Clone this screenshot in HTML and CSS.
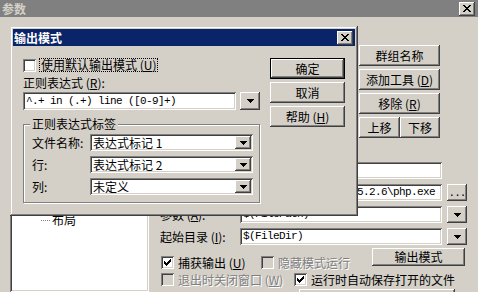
FILE: index.html
```html
<!DOCTYPE html>
<html lang="zh-CN">
<head>
<meta charset="utf-8">
<title>输出模式</title>
<link rel="stylesheet" href="styles.css">
</head>
<body>
<div class="win">
  <div class="caption inactive">
    <span class="cap-text">参数</span>
    <span class="capbtn raised"><svg width="8" height="7" viewBox="0 0 8 7" shape-rendering="crispEdges"><path d="M0 0h2v1H0zM6 0h2v1H6zM1 1h2v1H1zM5 1h2v1H5zM2 2h4v1H2zM3 3h2v1H3zM2 4h4v1H2zM1 5h2v1H1zM5 5h2v1H5zM0 6h2v1H0zM6 6h2v1H6z"/></svg></span>
  </div>
  <div class="client">
    <div class="tree sunken">
      <div class="tree-item"><span class="dots"></span>布局</div>
    </div>
    <div class="main">
      <div class="btn-col">
        <div class="btn raised">群组名称</div>
        <div class="btn raised">添加工具 (<u>D</u>)</div>
        <div class="btn raised">移除 (<u>R</u>)</div>
        <div class="btn-pair"><div class="btn raised up">上移</div><div class="btn raised down">下移</div></div>
      </div>
      <div class="frows">
        <div class="frow"><span class="flbl">菜单文本 (<u>M</u>):</span><div class="field sunken"></div></div>
        <div class="frow"><span class="flbl">命令 (<u>C</u>):</span><div class="field sunken mono">C:\ProgramFiles\php5.2.6\php.exe</div><div class="sbtn raised dots-btn">...</div></div>
        <div class="frow"><span class="flbl">参数 (<u>A</u>):</span><div class="field sunken mono">$(FilePath)</div><div class="sbtn raised"><svg width="7" height="4" viewBox="0 0 7 4" shape-rendering="crispEdges"><path d="M0 0h7v1H0zM1 1h5v1H1zM2 2h3v1H2zM3 3h1v1H3z"/></svg></div></div>
        <div class="frow"><span class="flbl">起始目录 (<u>I</u>):</span><div class="field sunken mono">$(FileDir)</div><div class="sbtn raised"><svg width="7" height="4" viewBox="0 0 7 4" shape-rendering="crispEdges"><path d="M0 0h7v1H0zM1 1h5v1H1zM2 2h3v1H2zM3 3h1v1H3z"/></svg></div></div>
      </div>
      <div class="opts">
        <div class="opt-row first">
          <div class="chk-item w100"><span class="chk sunken"><svg width="7" height="7" viewBox="0 0 7 7" shape-rendering="crispEdges"><path d="M6 0h1v1H6zM5 1h2v1H5zM0 2h1v1H0zM4 2h3v1H4zM0 3h2v1H0zM3 3h3v1H3zM0 4h5v1H0zM1 5h3v1H1zM2 6h1v1H2z"/></svg></span><span>捕获输出 (<u>U</u>)</span></div>
          <div class="chk-item w111 disabled"><span class="chk sunken"></span><span>隐藏模式运行</span></div>
          <div class="btn raised out-btn">输出模式</div>
        </div>
        <div class="opt-row second">
          <div class="chk-item w133 disabled"><span class="chk sunken"></span><span>退出时关闭窗口 (<u>W</u>)</span></div>
          <div class="chk-item"><span class="chk sunken"><svg width="7" height="7" viewBox="0 0 7 7" shape-rendering="crispEdges"><path d="M6 0h1v1H6zM5 1h2v1H5zM0 2h1v1H0zM4 2h3v1H4zM0 3h2v1H0zM3 3h3v1H3zM0 4h5v1H0zM1 5h3v1H1zM2 6h1v1H2z"/></svg></span><span>运行时自动保存打开的文件</span></div>
        </div>
        <div class="btn raised wide-btn"></div>
      </div>
    </div>
  </div>
</div>

<div class="dlg">
  <div class="caption active">
    <span class="cap-text">输出模式</span>
    <span class="capbtn raised"><svg width="8" height="7" viewBox="0 0 8 7" shape-rendering="crispEdges"><path d="M0 0h2v1H0zM6 0h2v1H6zM1 1h2v1H1zM5 1h2v1H5zM2 2h4v1H2zM3 3h2v1H3zM2 4h4v1H2zM1 5h2v1H1zM5 5h2v1H5zM0 6h2v1H0zM6 6h2v1H6z"/></svg></span>
  </div>
  <div class="dlg-body">
    <div class="dlg-main">
      <div class="chk-row"><span class="chk sunken"></span><span class="focus">使用默认输出模式 (<u>U</u>)</span></div>
      <div class="lbl-line">正则表达式 (<u>R</u>):</div>
      <div class="combo-row">
        <div class="rfield sunken mono">^.+ in (.+) line ([0-9]+)</div>
        <div class="rbtn raised"><svg width="7" height="4" viewBox="0 0 7 4" shape-rendering="crispEdges"><path d="M0 0h7v1H0zM1 1h5v1H1zM2 2h3v1H2zM3 3h1v1H3z"/></svg></div>
      </div>
      <div class="group">
        <span class="legend">正则表达式标签</span>
        <div class="grow"><span class="glbl">文件名称:</span><div class="combo sunken"><span class="ctext">表达式标记 1</span><span class="cbtn raised"><svg width="7" height="4" viewBox="0 0 7 4" shape-rendering="crispEdges"><path d="M0 0h7v1H0zM1 1h5v1H1zM2 2h3v1H2zM3 3h1v1H3z"/></svg></span></div></div>
        <div class="grow"><span class="glbl">行:</span><div class="combo sunken"><span class="ctext">表达式标记 2</span><span class="cbtn raised"><svg width="7" height="4" viewBox="0 0 7 4" shape-rendering="crispEdges"><path d="M0 0h7v1H0zM1 1h5v1H1zM2 2h3v1H2zM3 3h1v1H3z"/></svg></span></div></div>
        <div class="grow"><span class="glbl">列:</span><div class="combo sunken"><span class="ctext">未定义</span><span class="cbtn raised"><svg width="7" height="4" viewBox="0 0 7 4" shape-rendering="crispEdges"><path d="M0 0h7v1H0zM1 1h5v1H1zM2 2h3v1H2zM3 3h1v1H3z"/></svg></span></div></div>
      </div>
    </div>
    <div class="dlg-btns">
      <div class="btn raised default">确定</div>
      <div class="btn raised">取消</div>
      <div class="btn raised">帮助 (<u>H</u>)</div>
    </div>
  </div>
</div>
</body>
</html>
```

FILE: styles.css
```css
* { box-sizing: border-box; margin: 0; padding: 0; }
html, body { width: 478px; height: 292px; overflow: hidden; }
body {
  position: relative;
  background: #d4d0c8;
  color: #000;
  font-family: "Noto Sans CJK SC", "Noto Sans", sans-serif;
  font-size: 12px;
  line-height: 14px;
}
u { text-decoration: underline; text-underline-offset: 1px; }
svg { display: block; }

.raised {
  background: #d4d0c8;
  box-shadow: inset -1px -1px #404040, inset 1px 1px #fff, inset -2px -2px #808080, inset 2px 2px #d4d0c8;
}
.sunken {
  background: #fff;
  box-shadow: inset 1px 1px #808080, inset -1px -1px #fff, inset 2px 2px #404040, inset -2px -2px #d4d0c8;
}

/* outer window */
.win { height: 292px; overflow: hidden; display: flex; flex-direction: column; }
.caption { flex: none; display: flex; align-items: center; justify-content: space-between; height: 17px; }
.caption.inactive { background: #808080; color: #d4d0c8; padding: 0 3px 0 2px; }
.caption.active { background: #0a246a; color: #fff; padding: 0 2px 0 1px; }
.cap-text { font-weight: bold; line-height: 17px; }
.capbtn { width: 16px; height: 14px; display: flex; align-items: center; justify-content: center; }

.client { flex: 1; display: flex; min-height: 0; overflow: hidden; }
.tree { width: 139px; margin: 27px 0 0 10px; padding: 168px 0 0 31px; }
.tree-item { display: flex; align-items: center; height: 16px; line-height: 16px; }
.dots { width: 9px; border-top: 1px dotted #808080; margin-right: 2px; }

.main { width: 329px; display: flex; flex-direction: column; padding: 28px 0 0 11px; }
.btn-col { margin-left: 199px; width: 81px; display: flex; flex-direction: column; gap: 3px; }
.btn { height: 21px; display: flex; align-items: center; justify-content: center; white-space: nowrap; line-height: 14px; }
.btn-pair { display: flex; }
.btn.up { width: 41px; }
.btn.down { width: 40px; }

.frows { margin-top: 24px; display: flex; flex-direction: column; gap: 5px; }
.frow { height: 17px; display: flex; align-items: center; }
.flbl { width: 80px; white-space: nowrap; }
.field { width: 202px; height: 17px; }
.sbtn { width: 20px; height: 17px; margin-left: 5px; display: flex; align-items: center; justify-content: center; }
.dots-btn { align-items: flex-end; padding-bottom: 3px; line-height: 10px; font-family: "Liberation Mono", monospace; font-size: 11px; letter-spacing: -1px; }

.mono {
  font-family: "Liberation Mono", monospace;
  font-size: 11px;
  letter-spacing: -0.6px;
  line-height: 13px;
  padding: 2px 0 0 3px;
  white-space: nowrap;
  overflow: hidden;
}

.opts { margin-top: 3px; display: flex; flex-direction: column; }
.opt-row { display: flex; padding-left: 1px; }
.opt-row.first { height: 21px; align-items: flex-end; }
.opt-row.second { height: 17px; align-items: flex-end; }
.chk-item { display: flex; align-items: center; gap: 4px; height: 13px; line-height: 13px; white-space: nowrap; }
.w100 { width: 100px; }
.w111 { width: 111px; }
.w133 { width: 133px; }
.out-btn { width: 93px; height: 18px; align-self: flex-start; }
.wide-btn { margin: 3px 0 0 139px; width: 156px; height: 21px; flex: none; }

.chk { flex: none; width: 13px; height: 13px; display: flex; align-items: center; justify-content: center; }
.disabled { color: #808080; text-shadow: 1px 1px #fff; }
.disabled .chk { background: #d4d0c8; }

/* dialog */
.dlg {
  position: absolute;
  left: 10px;
  top: 26px;
  width: 348px;
  height: 190px;
  padding: 3px;
  background: #d4d0c8;
  box-shadow: inset -1px -1px #404040, inset 1px 1px #d4d0c8, inset -2px -2px #808080, inset 2px 2px #fff;
}
.dlg-body { display: flex; gap: 10px; padding: 12px 10px 0 10px; }
.dlg-main { width: 237px; display: flex; flex-direction: column; }
.dlg-btns { width: 75px; display: flex; flex-direction: column; gap: 3px; }
.btn.default { border: 1px solid #000; }

.chk-row { display: flex; align-items: center; gap: 3px; height: 14px; }
.focus { border: 1px dotted #000; padding: 0 1px; height: 14px; line-height: 12px; white-space: nowrap; }
.lbl-line { margin-top: 4px; line-height: 14px; }
.combo-row { margin-top: 2px; height: 18px; display: flex; gap: 4px; }
.rfield { width: 213px; height: 18px; padding-top: 3px; }
.rbtn { width: 20px; height: 18px; display: flex; align-items: center; justify-content: center; }

.group {
  position: relative;
  margin-top: 14px;
  border: 1px solid #808080;
  box-shadow: inset 1px 1px #fff, 1px 1px #fff;
  padding: 9px 6px 7px 8px;
  display: flex;
  flex-direction: column;
  gap: 5px;
}
.legend { position: absolute; top: -8px; left: 6px; padding: 0 2px; background: #d4d0c8; line-height: 14px; }
.grow { display: flex; align-items: center; height: 17px; }
.glbl { width: 58px; white-space: nowrap; }
.combo { width: 163px; height: 17px; display: flex; align-items: center; padding: 2px; }
.ctext { flex: 1; padding-left: 1px; line-height: 13px; white-space: nowrap; }
.cbtn { width: 16px; height: 13px; display: flex; align-items: center; justify-content: center; }
```
